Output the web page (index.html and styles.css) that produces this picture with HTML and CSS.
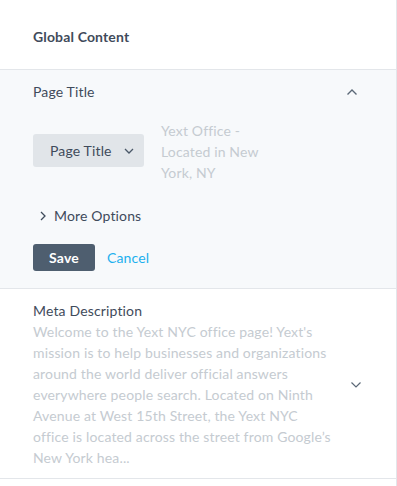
FILE: index.html
```html
<!DOCTYPE html>
<html lang="en">
<head>
    <meta charset="UTF-8">
    <title>Global Content</title>
    <link rel="stylesheet" href="styles.css">
</head>
<body>
    <div class="panel">
        <!-- Header -->
        <div class="panel-header">Global Content</div>

        <!-- Page Title (open) -->
        <div class="section section-open">
            <div class="section-title-row">
                <span class="section-title">Page Title</span>
                <svg class="chevron" width="12" height="8" viewBox="0 0 12 8"><path d="M1.5 6.5 L6 2 L10.5 6.5" fill="none" stroke="#5b6877" stroke-width="1.4"/></svg>
            </div>
            <div class="field-row">
                <button class="dropdown">
                    Page Title
                    <svg width="10" height="6" viewBox="0 0 10 6"><path d="M1 1 L5 5 L9 1" fill="none" stroke="#4a5868" stroke-width="1.3"/></svg>
                </button>
                <div class="placeholder">Yext Office - Located in New York, NY</div>
            </div>
            <div class="more-options">
                <svg width="6" height="10" viewBox="0 0 6 10"><path d="M1 1 L5 5 L1 9" fill="none" stroke="#3f4b5b" stroke-width="1.3"/></svg>
                More Options
            </div>
            <div class="actions">
                <button class="save">Save</button>
                <a href="#" class="cancel">Cancel</a>
            </div>
        </div>

        <!-- Meta Description (closed) -->
        <div class="section section-closed">
            <div class="meta-text">
                <div class="section-title">Meta Description</div>
                <div class="description">Welcome to the Yext NYC office page! Yext's mission is to help businesses and organizations around the world deliver official answers everywhere people search. Located on Ninth Avenue at West 15th Street, the Yext NYC office is located across the street from Google’s New York hea...</div>
            </div>
            <svg class="chevron" width="12" height="8" viewBox="0 0 12 8"><path d="M1.5 1.5 L6 6 L10.5 1.5" fill="none" stroke="#5b6877" stroke-width="1.2"/></svg>
        </div>
    </div>
</body>
</html>
```

FILE: styles.css
```css
/* General Styling */
body {
    margin: 0;
    padding: 0;
    font-family: 'Lato', 'Open Sans', sans-serif;
    font-size: 14px;
    letter-spacing: 0.15px;
    color: #3f4b5b;
    background-color: #fff;
}

.panel {
    width: 396px;
    height: 486px;
    border-right: 1px solid #e3e6ea;
}

/* Header */
.panel-header {
    height: 70px;
    box-sizing: border-box;
    padding: 27px 33px 0;
    line-height: 20px;
    font-weight: bold;
    border-bottom: 1px solid #e3e6ea;
}

.section {
    border-bottom: 1px solid #e3e6ea;
}

.section-title {
    line-height: 20px;
}

.chevron {
    display: block;
}

/* Open section */
.section-open {
    background-color: #f7f9fb;
    padding: 12px 38px 17px 33px;
}

.section-title-row {
    display: flex;
    justify-content: space-between;
    align-items: center;
}

.field-row {
    display: flex;
    align-items: flex-start;
    gap: 17px;
    margin-top: 18px;
}

.dropdown {
    display: flex;
    align-items: center;
    gap: 12px;
    margin-top: 14px;
    width: 111px;
    height: 33px;
    padding: 0 0 0 17px;
    border: none;
    border-radius: 3px;
    background-color: #e1e5e9;
    color: #3f4b5b;
    font-family: inherit;
    font-size: 14px;
    letter-spacing: inherit;
}

.placeholder {
    width: 110px;
    line-height: 21px;
    color: #c5cbd1;
}

.more-options {
    display: flex;
    align-items: center;
    gap: 8px;
    margin-top: 23px;
    padding-left: 7px;
    line-height: 20px;
}

.actions {
    display: flex;
    align-items: center;
    gap: 12px;
    margin-top: 18px;
}

.save {
    width: 62px;
    height: 27px;
    border: none;
    border-radius: 3px;
    background-color: #4e5e6f;
    color: #fff;
    font-family: inherit;
    font-size: 14px;
    font-weight: bold;
    letter-spacing: inherit;
}

.cancel {
    color: #1cb0ee;
    text-decoration: none;
}

/* Closed section */
.section-closed {
    display: flex;
    align-items: center;
    justify-content: space-between;
    padding: 12px 34px 10px 33px;
}

.meta-text {
    width: 300px;
}

.description {
    line-height: 21px;
    color: #c5cbd1;
}
```
